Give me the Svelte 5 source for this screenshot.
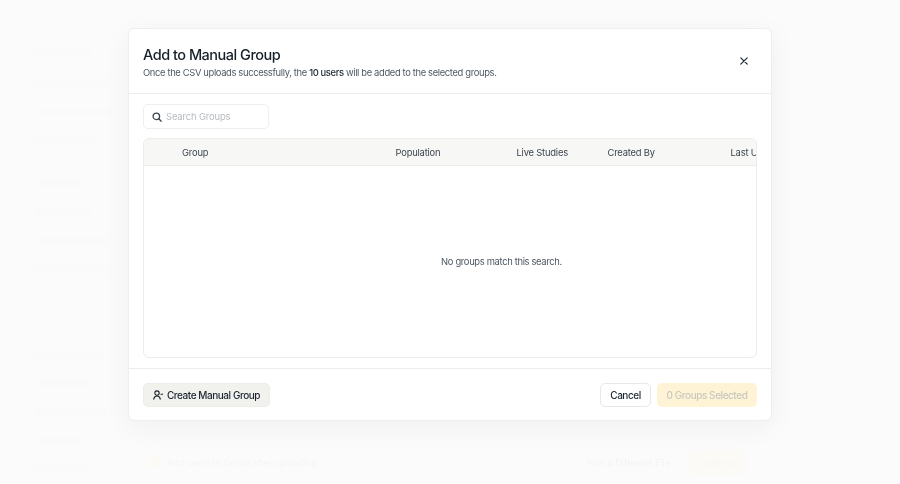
<script>
  const navTop = [58, 72, 82, 62];
  const navMid = [46, 58, 72, 78];
  const navLow = [68, 56, 72, 48, 52];
  const columns = ['Group', 'Population', 'Live Studies', 'Created By', 'Last Updated'];
</script>

<div class="page">
  <aside class="sidebar">
    <div class="logo"><span></span><span></span></div>
    <div class="nav first">{#each navTop as w}<div class="nav-item"><i></i><b style="width: {w}px"></b></div>{/each}</div>
    <div class="nav second">{#each navMid as w}<div class="nav-item"><i></i><b style="width: {w}px"></b></div>{/each}</div>
    <div class="nav third">{#each navLow as w}<div class="nav-item"><i></i><b style="width: {w}px"></b></div>{/each}</div>
  </aside>
  <main class="main">
    <div class="side-notes"><b class="n1"></b><b class="n2"></b><b class="n3"></b></div>
    <div class="actions">
      <label class="check"><span class="box"></span>Add users to Group after uploading</label>
      <div class="action-buttons">
        <span class="ghost">Pick a Different File</span>
        <span class="continue">Continue</span>
      </div>
    </div>
  </main>
</div>

<div class="backdrop">
  <div class="modal">
    <header class="head">
      <div>
        <h1>Add to Manual Group</h1>
        <p>Once the CSV uploads successfully, the <strong>10 users</strong> will be added to the selected groups.</p>
      </div>
      <button class="close" aria-label="Close">
        <svg width="16" height="16" viewBox="0 0 16 16" fill="none" stroke="#1c2630" stroke-width="1.2" stroke-linecap="round"><path d="M4.800 4.800l6.400 6.400M11.200 4.800l-6.400 6.400"/></svg>
      </button>
    </header>
    <section class="body">
      <div class="search">
        <svg width="10" height="10" viewBox="0 0 12 12" fill="none" stroke="#3a444e" stroke-width="1.600" stroke-linecap="round"><circle cx="5.2" cy="5.200" r="3.900"/><path d="M8.200 8.200l2.800 2.800"/></svg>
        <span>Search Groups</span>
      </div>
      <div class="table">
        <div class="thead">{#each columns as c}<span>{c}</span>{/each}</div>
        <div class="empty">No groups match this search.</div>
      </div>
    </section>
    <footer class="foot">
      <button class="create">
        <svg width="10" height="10" viewBox="0 0 11 11" fill="none" stroke="#1c2630" stroke-width="1.200" stroke-linecap="round"><circle cx="4.400" cy="3.400" r="2.400"/><path d="M.8 10c.3-2.200 1.700-3.400 3.600-3.400S7.700 7.800 8 10M8.800 4.700h1.800"/></svg>
        Create Manual Group
      </button>
      <div class="right">
        <button class="cancel">Cancel</button>
        <button class="selected">0 Groups Selected</button>
      </div>
    </footer>
  </div>
</div>

<style>
  :global(body) {
    margin: 0;
    background: #fff;
    font-family: Inter, "Liberation Sans", sans-serif;
  }
  button { font-family: inherit; }
  .page {
    width: 900px;
    height: 484px;
    display: flex;
    overflow: hidden;
    background: #fff;
    filter: blur(0.6px);
  }
  .sidebar {
    width: 130px;
    padding: 14px 0 0 16px;
    box-sizing: border-box;
    flex: none;
  }
  .logo { display: flex; gap: 20px; height: 12px; }
  .logo span { width: 38px; height: 8px; background: #e4e4e4; }
  .logo span + span { width: 14px; }
  .nav { display: flex; flex-direction: column; gap: 17px; }
  .first { margin-top: 22px; }
  .second { margin-top: 30px; }
  .third { margin-top: 72px; }
  .nav-item { display: flex; align-items: center; gap: 6px; height: 12px; }
  .nav-item i { width: 12px; height: 12px; background: #e6e6e6; border-radius: 2px; }
  .nav-item b { height: 8px; background: #e2e2e2; }
  .main {
    flex: 1;
    position: relative;
    display: flex;
    flex-direction: column;
    justify-content: flex-end;
    padding: 0 153px 10px 13px;
  }
  .side-notes {
    position: absolute;
    top: 93px;
    left: 675px;
    width: 70px;
    display: flex;
    flex-direction: column;
    gap: 40px;
  }
  .side-notes b { display: block; height: 8px; background: #e4e4e4; }
  .side-notes .n2 { width: 46px; margin-left: 10px; }
  .side-notes .n3 { width: 8px; margin-left: 30px; margin-top: -18px; }
  .actions { display: flex; align-items: center; justify-content: space-between; height: 24px; }
  .check { display: flex; align-items: center; gap: 7px; font-size: 9px; color: #1c2630; padding-left: 7px; }
  .box { width: 10px; height: 10px; background: #f5c84a; border-radius: 2px; }
  .action-buttons { display: flex; gap: 7px; font-size: 9px; font-weight: 500; }
  .ghost { padding: 0 10px; line-height: 23px; color: #1c2630; border: 1px solid #ddd; border-radius: 5px; }
  .continue { padding: 0 10px; line-height: 25px; color: #777; background: #fbdf8c; border-radius: 5px; }

  .backdrop {
    position: fixed;
    inset: 0;
    background: rgba(251, 251, 251, 0.97);
    display: flex;
    align-items: flex-start;
    justify-content: center;
  }
  .modal {
    width: 644px;
    height: 393px;
    margin-top: 28px;
    box-sizing: border-box;
    background: #fff;
    border: 1px solid #eeeeee;
    border-radius: 6px;
    box-shadow: 0 6px 28px rgba(30, 30, 30, 0.05);
    display: flex;
    flex-direction: column;
    color: #1c2630;
  }
  .head {
    height: 65px;
    box-sizing: border-box;
    flex: none;
    padding: 16px 19px 0 14px;
    border-bottom: 1px solid #ececec;
    display: flex;
    justify-content: space-between;
    align-items: flex-start;
  }
  h1 { margin: 0; font-size: 14.5px; line-height: 20px; font-weight: 500; letter-spacing: -0.5px; color: #16202a; }
  p { margin: 0; font-size: 9.4px; line-height: 15px; letter-spacing: -0.35px; color: #4f5862; }
  strong { font-weight: 500; color: #1c2630; }
  .close { width: 16px; height: 16px; margin: 8px 0 0; padding: 0; border: 0; background: none; display: flex; }
  .body {
    flex: 1;
    box-sizing: border-box;
    padding: 10px 14px 10px;
    border-bottom: 1px solid #ececec;
    display: flex;
    flex-direction: column;
    gap: 9px;
  }
  .search {
    width: 126px;
    height: 25px;
    box-sizing: border-box;
    border: 1px solid #eeeeee;
    border-radius: 5px;
    display: flex;
    align-items: center;
    gap: 4px;
    padding-left: 8px;
    font-size: 9.4px;
    letter-spacing: -0.12px;
    color: #b6babd;
  }
  .table {
    flex: 1;
    border: 1px solid #ececec;
    border-radius: 6px;
    overflow: hidden;
    display: flex;
    flex-direction: column;
  }
  .thead {
    height: 27px;
    box-sizing: border-box;
    flex: none;
    background: #f7f7f5;
    border-bottom: 1px solid #ebebe8;
    display: grid;
    grid-template-columns: 213.5px 121px 91px 123px 200px;
    align-items: center;
    padding-left: 38px;
    font-size: 9.4px;
    letter-spacing: -0.2px;
    color: #3c4650;
    white-space: nowrap;
  }
  .empty {
    flex: 1;
    display: flex;
    align-items: center;
    justify-content: center;
    padding-left: 103px;
    font-size: 9.4px;
    letter-spacing: -0.33px;
    color: #4c5660;
  }
  .foot {
    height: 51px;
    flex: none;
    box-sizing: border-box;
    padding: 0 14px 0 14px;
    display: flex;
    align-items: center;
    justify-content: space-between;
  }
  .right { display: flex; gap: 6px; }
  .foot button {
    height: 24px;
    border-radius: 5px;
    font-size: 10px;
    font-weight: 500;
    letter-spacing: -0.45px;
    padding: 0;
    display: flex;
    align-items: center;
    justify-content: center;
    box-sizing: border-box;
  }
  .foot .create {
    width: 127px;
    gap: 4px;
    background: #f1f1ee;
    border: 1px solid #ecece9;
    color: #1c2630;
  }
  .foot .cancel {
    width: 51px;
    background: #fff;
    border: 1px solid #e6e8ea;
    color: #1c2630;
  }
  .foot .selected {
    width: 100px;
    background: #fff3d6;
    border: 0;
    color: #c9c8bf;
  }
</style>
